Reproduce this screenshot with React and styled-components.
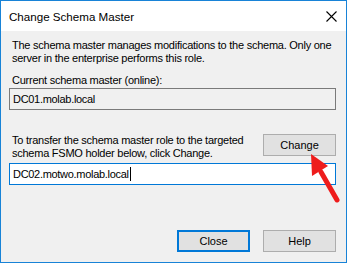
import React from 'react'
import styled, { createGlobalStyle } from 'styled-components';

const Global = createGlobalStyle`
  html, body {
    margin: 0;
    padding: 0;
    background: #ffffff;
  }
  * { box-sizing: border-box; }
`;

const Window = styled.div`
  position: relative;
  width: 347px;
  height: 263px;
  border: 1px solid #1883d7;
  background: #f0f0f0;
  display: flex;
  flex-direction: column;
  font-family: "Liberation Sans", Arial, sans-serif;
  font-size: 11px;
  color: #000;
`;

const TitleBar = styled.div`
  height: 30px;
  flex-shrink: 0;
  background: #ffffff;
  display: flex;
  align-items: center;
  justify-content: space-between;
  padding: 0 9px 0 8px;
  font-size: 11.6px;
`;

const Body = styled.div`
  flex: 1;
  display: flex;
  flex-direction: column;
  padding: 8px 10px 10px 8px;
`;

const Text = styled.div`
  line-height: 13px;
  padding-left: 3px;
  letter-spacing: -0.25px;
  white-space: nowrap;
  margin-top: ${({ top }) => top || 0}px;
`;

const Field = styled.div`
  height: 22px;
  flex-shrink: 0;
  margin-top: ${({ top }) => top || 0}px;
  border: 1px solid ${({ focused }) => focused ? '#0078d7' : '#7a7a7a'};
  background: ${({ focused }) => focused ? '#ffffff' : '#f0f0f0'};
  display: flex;
  align-items: center;
  padding-left: 3px;
  letter-spacing: -0.3px;
`;

const Caret = styled.span`
  display: inline-block;
  width: 1px;
  height: 14px;
  background: #000;
  margin-left: 1px;
`;

const TransferRow = styled.div`
  display: flex;
  justify-content: space-between;
  align-items: flex-start;
  margin-top: 24px;
`;

const Button = styled.div`
  width: 73px;
  height: 22px;
  flex-shrink: 0;
  border: ${({ primary }) => primary ? '2px solid #0078d7' : '1px solid #adadad'};
  background: #e1e1e1;
  display: flex;
  align-items: center;
  justify-content: center;
`;

const Footer = styled.div`
  display: flex;
  justify-content: flex-end;
  gap: 13px;
  margin-top: auto;
`;

const Arrow = styled.svg`
  position: absolute;
  left: 298px;
  top: 146px;
`;

export default function App() {
    return (
        <Window>
            <Global />
            <TitleBar>
                <span>Change Schema Master</span>
                <svg width="11" height="11" viewBox="0 0 11 11">
                    <path d="M0.5 0.5 L10.5 10.5 M10.5 0.5 L0.5 10.5" stroke="#000" strokeWidth="1.1" fill="none" />
                </svg>
            </TitleBar>
            <Body>
                <Text>The schema master manages modifications to the schema. Only one<br />server in the enterprise performs this role.</Text>
                <Text top={9}>Current schema master (online):</Text>
                <Field top={1}>DC01.molab.local</Field>
                <TransferRow>
                    <Text>To transfer the schema master role to the targeted<br />schema FSMO holder below, click Change.</Text>
                    <Button>Change</Button>
                </TransferRow>
                <Field top={3} focused>DC02.motwo.molab.local<Caret /></Field>
                <Footer>
                    <Button primary>Close</Button>
                    <Button>Help</Button>
                </Footer>
            </Body>
            <Arrow width="48" height="60" viewBox="0 0 48 60">
                {/* red callout arrow pointing at the Change button */}
                <path d="M38 53 L22 25" stroke="#ee1c1c" strokeWidth="5" strokeLinecap="round" fill="none" />
                <path d="M12 7 L29 19 L13 29 Z" fill="#ee1c1c" />
            </Arrow>
        </Window>
    )
}
